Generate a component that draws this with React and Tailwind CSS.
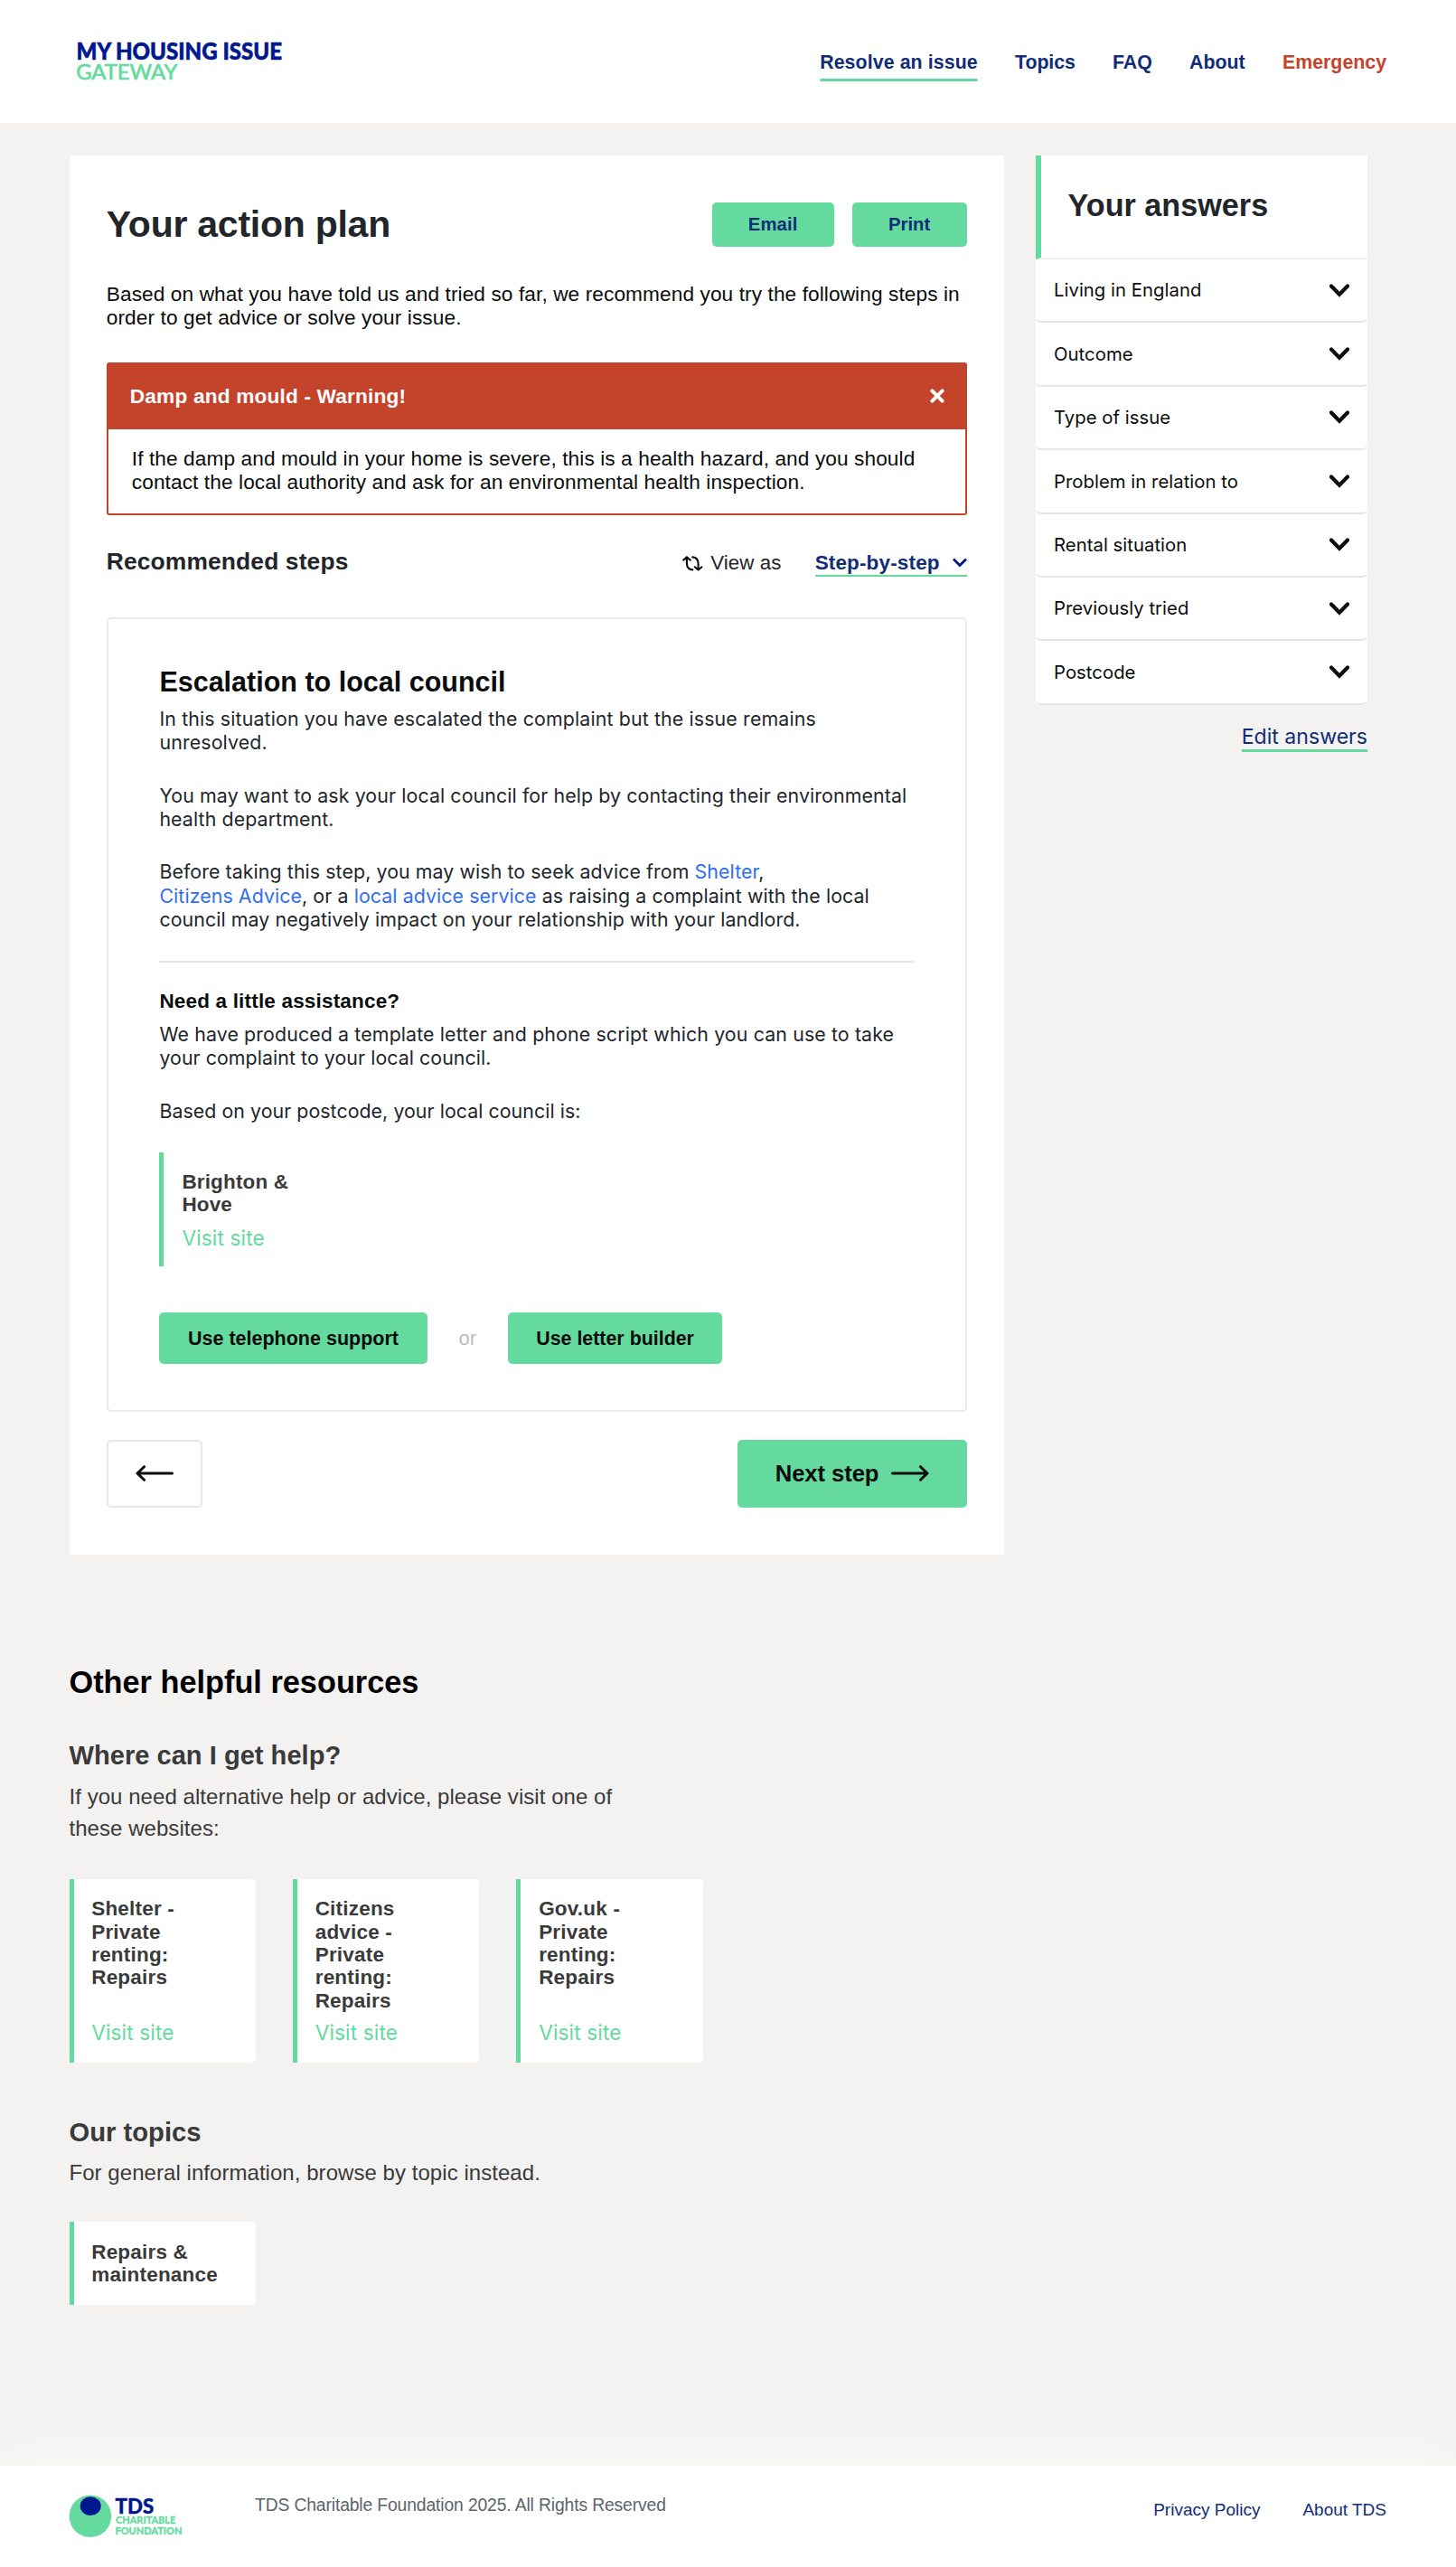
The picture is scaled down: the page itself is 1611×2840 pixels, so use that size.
import React from "react";

const NAV = [
  { label: "Resolve an issue", tone: "text-[#122d77]", active: true, track: "tracking-[0.1px]" },
  { label: "Topics", tone: "text-[#122d77]", track: "tracking-[-0.1px]" },
  { label: "FAQ", tone: "text-[#122d77]", track: "tracking-[0px]" },
  { label: "About", tone: "text-[#122d77]", track: "tracking-[0px]" },
  { label: "Emergency", tone: "text-[#c4432b]", track: "tracking-[0px]" },
];

const ANSWERS = [
  "Living in England",
  "Outcome",
  "Type of issue",
  "Problem in relation to",
  "Rental situation",
  "Previously tried",
  "Postcode",
];

const SITES = [
  ["Shelter -", "Private", "renting:", "Repairs"],
  ["Citizens", "advice -", "Private", "renting:", "Repairs"],
  ["Gov.uk -", "Private", "renting:", "Repairs"],
];

function BrandLogo() {
  return (
    <svg width="240" height="68" viewBox="80 34 240 68" className="ml-[80px] mt-[34px] block" fontFamily="Lato, sans-serif">
      <text x="84.5" y="66.3" fontSize="25.6" fontWeight="900" fill="#00188f" stroke="#00188f" strokeWidth="0.6" textLength="227.5" lengthAdjust="spacingAndGlyphs">MY HOUSING ISSUE</text>
      <text x="84.2" y="88.3" fontSize="23.8" fontWeight="400" fill="#64da9e" stroke="#64da9e" strokeWidth="0.7" textLength="112" lengthAdjust="spacingAndGlyphs">GATEWAY</text>
    </svg>
  );
}

function FoundationLogo() {
  return (
    <svg width="130" height="60" viewBox="76 2754 130 60" className="-mt-[5px] block shrink-0" fontFamily="Lato, sans-serif">
      <circle cx="99.9" cy="2783.8" r="23.3" fill="#64da9e" />
      <ellipse cx="100.2" cy="2772.6" rx="11.5" ry="10.4" fill="#00188f" />
      <text x="127.6" y="2780.8" fontSize="23.4" fontWeight="900" fill="#00188f" stroke="#00188f" strokeWidth="0.4" textLength="42.6" lengthAdjust="spacingAndGlyphs">TDS</text>
      <text x="128" y="2791.8" fontSize="10.8" fontWeight="700" fill="#64da9e" stroke="#64da9e" strokeWidth="0.35" textLength="66.3" lengthAdjust="spacingAndGlyphs">CHARITABLE</text>
      <text x="127.6" y="2803.8" fontSize="10.8" fontWeight="700" fill="#64da9e" stroke="#64da9e" strokeWidth="0.35" textLength="73.8" lengthAdjust="spacingAndGlyphs">FOUNDATION</text>
    </svg>
  );
}

function Chevron() {
  return (
    <svg width="22" height="16" viewBox="0 0 22 16" fill="none" stroke="#0b0c0c" strokeWidth="4.2">
      <path d="M2 2.5 L11 11.8 L20 2.5" strokeLinecap="round" />
    </svg>
  );
}

function Arrow({ left }) {
  return (
    <svg width="42" height="20" viewBox="0 0 42 20" fill="none" stroke="#0b0c0c" strokeWidth="3" strokeLinecap="round" strokeLinejoin="round">
      {left ? <path d="M40.5 10 H2 M9.5 2.7 L2 10 L9.5 17.3" /> : <path d="M1.5 10 H40 M32.5 2.7 L40 10 L32.5 17.3" />}
    </svg>
  );
}

function TopicCard({ lines, link }) {
  return (
    <div className={"flex w-[206.4px] flex-col justify-between rounded-r-[5px] border-l-[5px] border-[#64da9e] bg-white pl-[19.7px] pt-[20.5px] " + (link ? "h-[203px] pb-[18px]" : "h-[91.7px]")}>
      <div className="text-[22.5px] font-bold leading-[25.4px] tracking-[0.2px] text-[#3a3a3a]">
        {lines.map((l) => <div key={l}>{l}</div>)}
      </div>
      {link && <VisitLink />}
    </div>
  );
}

function VisitLink() {
  return <a className="font-[Inter,sans-serif] text-[22.67px] leading-[30px] tracking-[0.12px] text-[#64da9e]">Visit site</a>;
}

export default function App() {
  return (
    <div className="h-[2840px] w-[1611px] overflow-hidden bg-[#f3f2f0] font-['Liberation_Sans',Arial,sans-serif] text-[#0b0c0c]">
      <header className="flex h-[136px] items-start justify-between bg-white pr-[77px]">
        <BrandLogo />
        <nav className="mt-[56px] flex gap-[41.3px]">
          {NAV.map((n) => (
            <a key={n.label} className={"whitespace-nowrap text-[21.33px] font-bold leading-[26px] " + n.tone + " " + n.track}>
              {n.label}
              {n.active && <div className="mt-[5px] h-[3px] rounded-full bg-[#64da9e]" />}
            </a>
          ))}
        </nav>
      </header>

      <div className="flex items-start gap-[35px] pl-[76.5px] pt-[36px]">
        <main className="h-[1548px] w-[1034.5px] bg-white px-[41.3px] pt-[52px]">
          <div className="flex h-[48.5px] items-center">
            <h1 className="flex-1 text-[41px] font-bold tracking-[-0.25px] text-[#22252a]">Your action plan</h1>
            <button className="mr-[19.7px] h-full w-[135.3px] rounded-[5px] bg-[#64da9e] text-[20.3px] font-bold tracking-[0.1px] text-[#122d77]">Email</button>
            <button className="h-full w-[127.2px] rounded-[5px] bg-[#64da9e] text-[20.3px] font-bold text-[#122d77]">Print</button>
          </div>

          <p className="mt-[39px] whitespace-nowrap text-[22.67px] leading-[26.4px] tracking-[0.09px]">
            Based on what you have told us and tried so far, we recommend you try the following steps in<br />
            order to get advice or solve your issue.
          </p>

          <section className="mt-[37px] h-[168.5px] rounded-[3px] border-2 border-[#c4432b]">
            <div className="flex h-[71.5px] items-center justify-between bg-[#c4432b] pb-[3px] pl-[24px] pr-[23px]">
              <h2 className="text-[22.67px] font-bold tracking-[0.17px] text-white">Damp and mould - Warning!</h2>
              <svg width="16" height="16" viewBox="0 0 16 16" stroke="#fff" strokeWidth="4" strokeLinecap="round">
                <path d="M2.4 2.4 L13.6 13.6 M13.6 2.4 L2.4 13.6" />
              </svg>
            </div>
            <p className="whitespace-nowrap pl-[26px] pt-[19px] text-[22.67px] leading-[26.2px] tracking-[0.09px]">
              If the damp and mould in your home is severe, this is a health hazard, and you should<br />
              contact the local authority and ask for an environmental health inspection.
            </p>
          </section>

          <div className="mt-[35px] flex h-[32px] items-start">
            <h2 className="flex-1 pt-[0.5px] text-[26.4px] font-bold leading-[32px] tracking-[0.13px] text-[#22252a]">Recommended steps</h2>
            <svg width="23" height="17" viewBox="0 0 23 17" className="mr-[8px] mt-[10px]" fill="none" stroke="#0b0c0c" strokeWidth="2.1" strokeLinecap="round" strokeLinejoin="round">
              <path d="M1.2 4.6 L4.9 1.4 L8.8 4.6 M4.9 1.8 V8 Q5 15 11.3 15.4" />
              <path d="M13.8 12.3 L17.6 15.5 L21.5 12.3 M17.6 15 V8.8 Q17.5 1.8 11.2 1.4" />
            </svg>
            <span className="mr-[37px] mt-[2px] text-[22.3px] leading-[31px] tracking-[0.1px] text-[#22252a]">View as</span>
            <a className="mt-[1px] flex items-center border-b-2 border-[#64da9e] text-[22.5px] font-bold leading-[30px] tracking-[0.15px] text-[#122d77]">
              <span className="mb-[-2px] mt-[2px] leading-[30px]">Step-by-step</span>
              <svg width="16" height="11" viewBox="0 0 16 11" className="ml-[14px] mt-[4px]" fill="none" stroke="#00188f" strokeWidth="2.8">
                <path d="M1 1.6 L8 8.6 L15 1.6" />
              </svg>
            </a>
          </div>

          <section className="mt-[46px] h-[879px] rounded-[5px] border-2 border-[#eaeaea] px-[56.6px] pt-[51px]">
            <h2 className="text-[30.5px] font-bold leading-[36px]">Escalation to local council</h2>
            <div className="mt-[10px] whitespace-nowrap font-[Inter,sans-serif] text-[21.33px] leading-[26.5px] tracking-[0.09px] text-[#22252a]">
              <p className="tracking-[0.14px]">
                In this situation you have escalated the complaint but the issue remains<br />
                unresolved.
              </p>
              <p className="mt-[31.7px] tracking-[0.11px]">
                You may want to ask your local council for help by contacting their environmental<br />
                health department.
              </p>
              <p className="mt-[31.7px]">
                Before taking this step, you may wish to seek advice from <a className="text-[#2f6df6]">Shelter</a>,<br />
                <a className="text-[#2f6df6]">Citizens Advice</a>, or a <a className="text-[#2f6df6]">local advice service</a> as raising a complaint with the local<br />
                council may negatively impact on your relationship with your landlord.
              </p>
            </div>
            <div className="mt-[32.5px] h-[2px] bg-[#e6e6e6]" />
            <h3 className="mt-[29px] text-[22.5px] font-bold leading-[27px] tracking-[0.18px]">Need a little assistance?</h3>
            <div className="mt-[9.6px] whitespace-nowrap font-[Inter,sans-serif] text-[21.33px] leading-[26.5px] tracking-[0.13px] text-[#22252a]">
              <p>
                We have produced a template letter and phone script which you can use to take<br />
                <span className="tracking-[0.07px]">your complaint to your local council.</span>
              </p>
              <p className="mt-[32px] tracking-[0.06px]">Based on your postcode, your local council is:</p>
            </div>
            <div className="mt-[32.5px] h-[126.7px] border-l-[5px] border-[#64da9e] pl-[20px] pt-[20px]">
              <div className="text-[22.5px] font-bold leading-[25.3px] tracking-[0.15px] text-[#3a3a3a]">Brighton &amp;<br />Hove</div>
              <div className="mt-[9.3px] leading-[30px]"><VisitLink /></div>
            </div>
            <div className="mt-[50.3px] flex h-[57px] items-center">
              <button className="h-full w-[296.2px] rounded-[5px] bg-[#64da9e] pt-[1px] text-[21.5px] font-bold">Use telephone support</button>
              <span className="w-[89.5px] text-center text-[22px] text-[#bcbcbc]">or</span>
              <button className="h-full w-[237px] rounded-[5px] bg-[#64da9e] pt-[1px] text-[21.4px] font-bold">Use letter builder</button>
            </div>
          </section>

          <div className="mt-[31px] flex h-[74.7px] justify-between">
            <button className="flex w-[106.7px] items-center justify-center rounded-[5px] border-2 border-[#e8e8e8]"><Arrow left /></button>
            <button className="flex w-[254px] items-center justify-between rounded-[5px] bg-[#64da9e] pl-[42px] pr-[41.3px] text-[25.7px] font-bold tracking-[-0.1px]">
              Next step
              <Arrow />
            </button>
          </div>
        </main>

        <aside className="w-[367px]">
          <div className="bg-white">
            <h2 className="h-[115px] border-b-2 border-l-[6px] border-b-[#f0f0f0] border-l-[#64da9e] pl-[29.5px] pt-[35.4px] text-[34.2px] font-bold leading-[40px] text-[#22252a]">Your answers</h2>
            {ANSWERS.map((a) => (
              <div key={a} className="flex h-[70.4px] items-center justify-between rounded-b-[5px] border-b-2 border-[#e6e6e6] pl-[20px] pr-[20.5px] pt-[1px] font-[Inter,sans-serif] text-[20.3px] tracking-[0.04px]">
                {a}
                <Chevron />
              </div>
            ))}
          </div>
          <div className="mt-[21px] flex justify-end">
            <a className="border-b-[3px] border-[#64da9e] font-[Inter,sans-serif] text-[23.1px] leading-[28px] text-[#122d77]">Edit answers</a>
          </div>
        </aside>
      </div>

      <section className="pl-[76.5px] pt-[120.8px] text-[#3a3a3a]">
        <h2 className="text-[34.3px] font-bold leading-[40px] text-black">Other helpful resources</h2>
        <h3 className="mt-[44px] text-[29.1px] font-bold leading-[34px]">Where can I get help?</h3>
        <p className="mt-[10.5px] pt-[0.5px] text-[24px] leading-[35px] tracking-[0.05px]">
          If you need alternative help or advice, please visit one of<br />
          these websites:
        </p>
        <div className="mt-[38.8px] flex gap-[41.1px]">
          {SITES.map((s) => <TopicCard key={s[0]} lines={s} link />)}
        </div>
        <h3 className="mt-[60.5px] text-[29.2px] font-bold leading-[34px]">Our topics</h3>
        <p className="mt-[10.2px] text-[24px] leading-[35px] tracking-[0.05px]">For general information, browse by topic instead.</p>
        <div className="mt-[37px]">
          <TopicCard lines={["Repairs &", "maintenance"]} />
        </div>
      </section>

      <footer className="mt-[178px] flex h-[112px] items-start bg-white pl-[76px] pr-[77px] pt-[31px] shadow-[0_0_80px_#ffffff]">
        <FoundationLogo />
        <p className="ml-[76px] flex-1 pt-[1px] text-[19.3px] leading-[24px] tracking-[-0.12px] text-[#5c646b]">TDS Charitable Foundation 2025. All Rights Reserved</p>
        <nav className="mt-[6px] flex gap-[47px] text-[19px] leading-[24px] text-[#122d77]">
          <a>Privacy Policy</a>
          <a>About TDS</a>
        </nav>
      </footer>
    </div>
  );
}
